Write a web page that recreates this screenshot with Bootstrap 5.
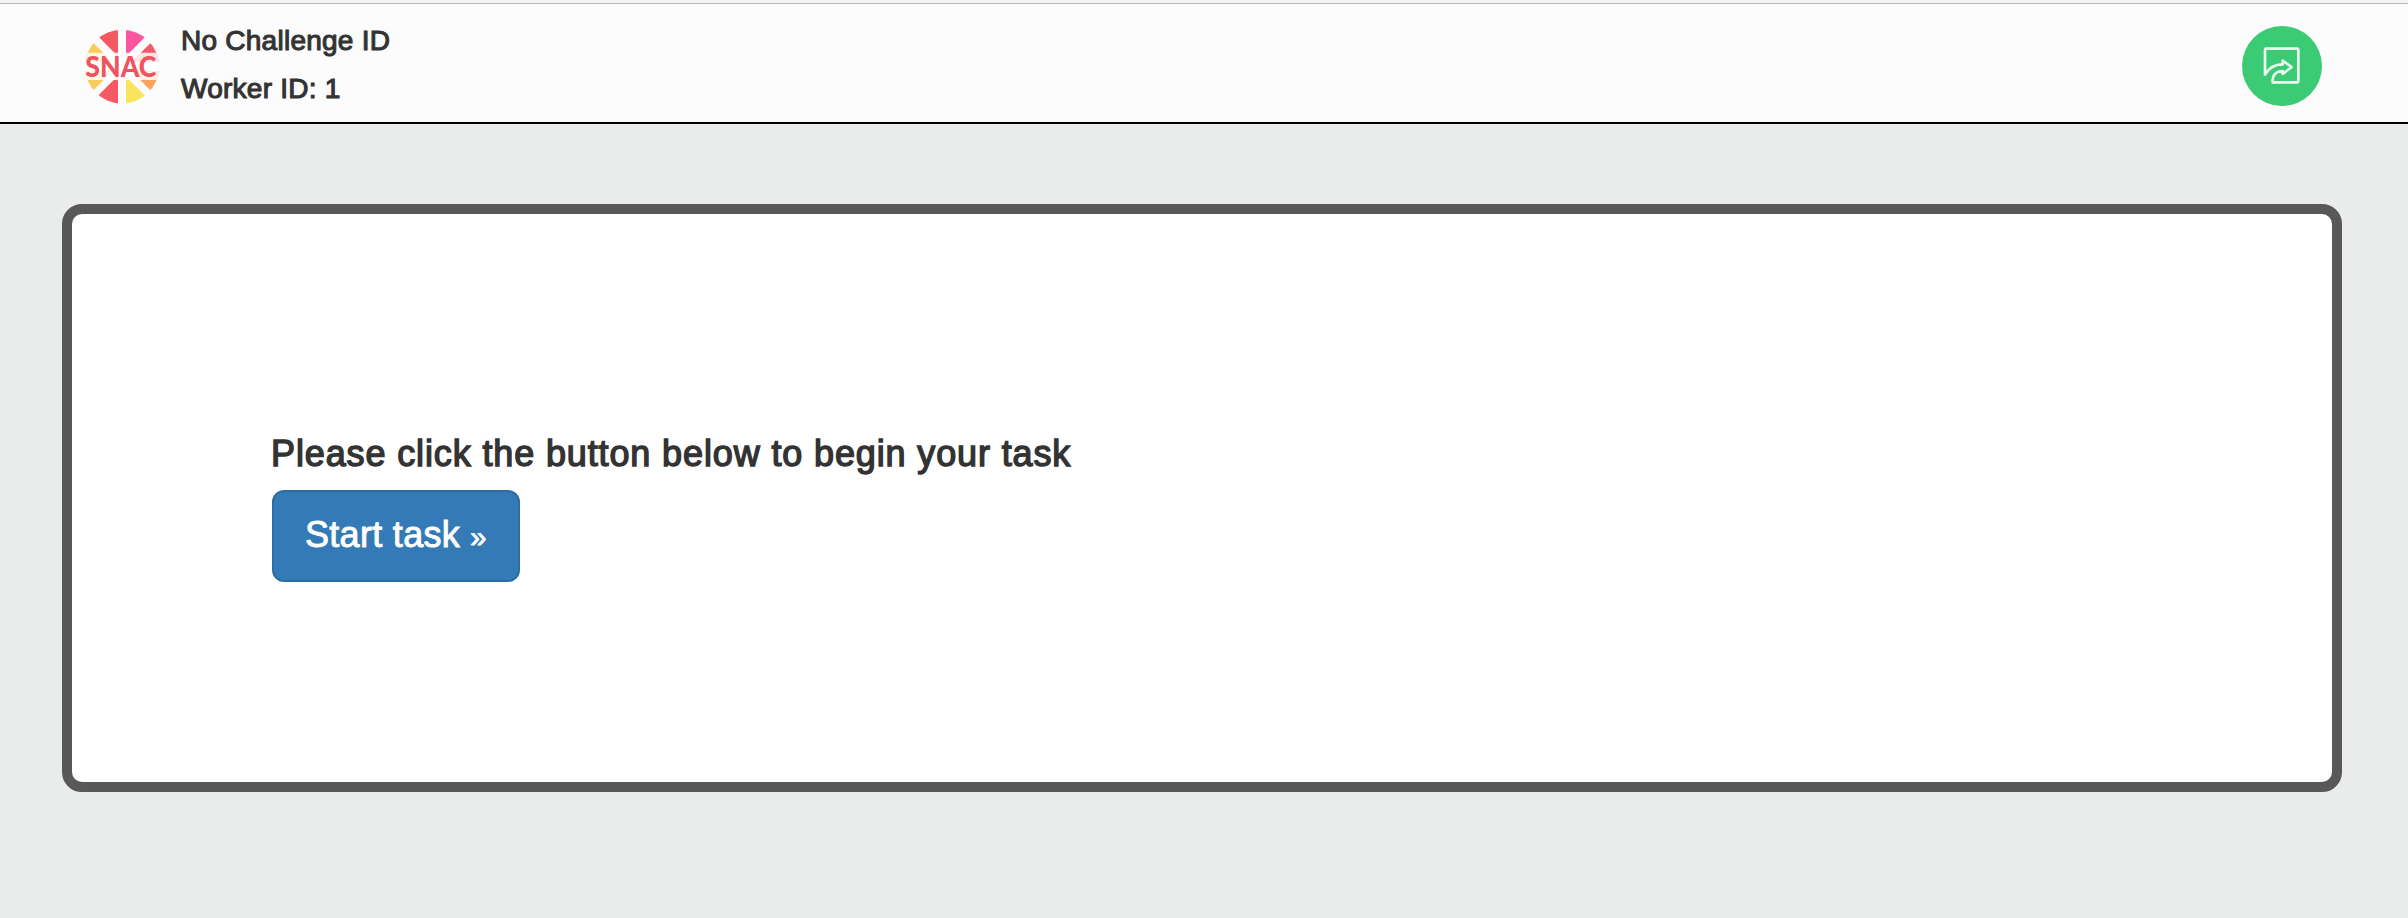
<!DOCTYPE html>
<html lang="en">
<head>
<meta charset="utf-8">
<title>SNAC task</title>
<link rel="stylesheet" href="https://cdn.jsdelivr.net/npm/bootstrap@5.3.0/dist/css/bootstrap.min.css">
<style>
body{background:#eaeceb;color:#333;font-family:"Liberation Sans",Arial,sans-serif;min-height:918px}
.topbar{height:124px;background:#fcfcfc;border-bottom:2px solid #000;padding:0 86px 0 85px}
.strip{height:4px;background:#f3f3f3;border-bottom:1px solid #bbb;margin:0 -86px 0 -85px}
.ids{font-size:28px;line-height:48px;margin-left:22px;padding-top:13px;letter-spacing:.25px;-webkit-text-stroke:1.1px #333}
.logo{margin-top:25px;width:74px;height:75px;overflow:visible}
.share{width:80px;height:80px;margin-top:22px}
.panel{margin:80px 66px 0 62px;height:588px;border:10px solid #585858;border-radius:20px;background:#fff;padding:220px 200px 0}
.prompt{font-size:36px;line-height:40px;margin:0 0 16px -1px;font-weight:400;letter-spacing:.87px;-webkit-text-stroke:1.4px #333;white-space:nowrap}
.start{--bs-btn-color:#fff;--bs-btn-bg:#337ab7;--bs-btn-border-color:#2e6da4;--bs-btn-hover-color:#fff;--bs-btn-hover-bg:#286090;width:248px;height:92px;border-width:2px;border-radius:12px;font-size:36px;line-height:48px;padding:0 0 0 31px;text-align:left;letter-spacing:.3px;-webkit-text-stroke:.9px #fff}
.raquo{font-size:29px;letter-spacing:0}
</style>
</head>
<body>
<header class="topbar">
  <div class="strip"></div>
  <div class="d-flex align-items-start">
    <svg class="logo" viewBox="45 42 222 225" aria-label="SNAC">
      <defs><clipPath id="disc"><circle cx="156" cy="155" r="111"/></clipPath></defs>
      <g clip-path="url(#disc)">
        <path fill="#f75964" d="M144 40V124L80 60V40Z"/>
        <path fill="#fa559f" d="M168 40V124L238 53V40Z"/>
        <path fill="#f75964" d="M241 85L184 141H270V85Z"/>
        <path fill="#f9cb5c" d="M71 85L128 141H40V85Z"/>
        <path fill="#f9cb5c" d="M40 168H128L71 225H40Z"/>
        <path fill="#f9a35c" d="M184 168H270V226H241Z"/>
        <path fill="#f75964" d="M144 182V270H80V246Z"/>
        <path fill="#f8e45e" d="M168 185V270H226V243Z"/>
        <path fill="#fff" fill-opacity=".84" d="M40 113H270V195H40Z"/>
      </g>
      <text x="46" y="186" textLength="213" lengthAdjust="spacingAndGlyphs" font-family="Lato,sans-serif" font-weight="900" font-size="85" fill="#ee535e">SNAC</text>
    </svg>
    <div class="ids"><div>No Challenge ID</div><div>Worker ID: 1</div></div>
    <svg class="share ms-auto" viewBox="0 0 240 240" aria-label="Share">
      <circle cx="120" cy="120" r="120" fill="#3acb74"/>
      <path fill="none" stroke="#e9fcf0" stroke-width="8" stroke-linejoin="round" stroke-linecap="round" d="M69 146V71Q69 68 72 68H165Q169 68 169 72V165Q169 169 165 169H92Q90 137 122 135V144L149 123L122 104V115Q86 115 69 146Z"/>
    </svg>
  </div>
</header>
<main class="panel">
  <h1 class="prompt">Please click the button below to begin your task</h1>
  <button type="button" class="btn btn-primary start">Start task <span class="raquo">»</span></button>
</main>
<script src="https://cdn.jsdelivr.net/npm/bootstrap@5.3.0/dist/js/bootstrap.bundle.min.js"></script>
</body>
</html>
